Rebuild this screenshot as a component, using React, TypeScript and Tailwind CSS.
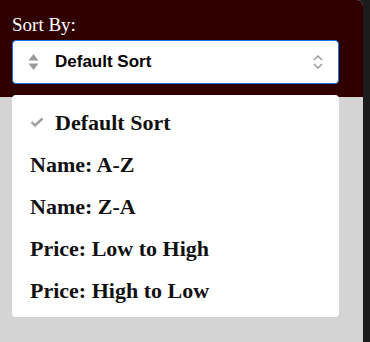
import React from 'react';

const options = ['Default Sort', 'Name: A-Z', 'Name: Z-A', 'Price: Low to High', 'Price: High to Low'];

export default function App() {
  const selected = 'Default Sort';

  return (
    <div className="flex h-[342px] w-[370px] bg-[#1c1c1c]">
      <div className="flex w-[363px] flex-col rounded-tr-md bg-[#d4d4d4]">
        <div className="h-[97px] rounded-tr-md bg-[#300000] px-3 pt-[14px]">
          <label className="block text-[19px] leading-[22px] text-white [font-family:'Liberation_Serif',serif]">
            Sort By:
          </label>
          <div className="mt-[4px] flex h-[44px] w-[327px] items-center rounded-[4px] border border-[#1a73e8] bg-white pl-[15px] pr-[14px]">
            <svg width="11" height="18" viewBox="0 0 11 18" className="shrink-0">
              <path d="M5.5 1 L10.5 7.5 H0.5 Z" fill="#9a9a9a" />
              <path d="M5.5 17 L10.5 10.5 H0.5 Z" fill="#9a9a9a" />
            </svg>
            <span className="ml-[16px] flex-1 text-[17px] font-bold text-black [font-family:'Liberation_Sans',Arial,sans-serif]">
              {selected}
            </span>
            <svg width="12" height="18" viewBox="0 0 12 18" fill="none" stroke="#9a9a9a" strokeWidth="1.5">
              <path d="M2 7 L6 3 L10 7" />
              <path d="M2 11 L6 15 L10 11" />
            </svg>
          </div>
        </div>
        <div className="mx-3 -mt-[2px] w-[327px] rounded-[4px] bg-white pb-[6px] pt-[6px]">
          {options.map((o) => (
            <div key={o} className="flex h-[42px] items-center pl-[18px]">
              {o === selected && (
                <svg width="14" height="10" viewBox="0 0 14 10" fill="none" stroke="#a0a0a0" strokeWidth="2.4" className="mr-[11px]">
                  <path d="M1.5 5 L5 8.5 L12.5 1.5" />
                </svg>
              )}
              <span className="text-[22px] font-bold text-[#111] [font-family:'Liberation_Serif',serif]">{o}</span>
            </div>
          ))}
        </div>
      </div>
    </div>
  );
}
